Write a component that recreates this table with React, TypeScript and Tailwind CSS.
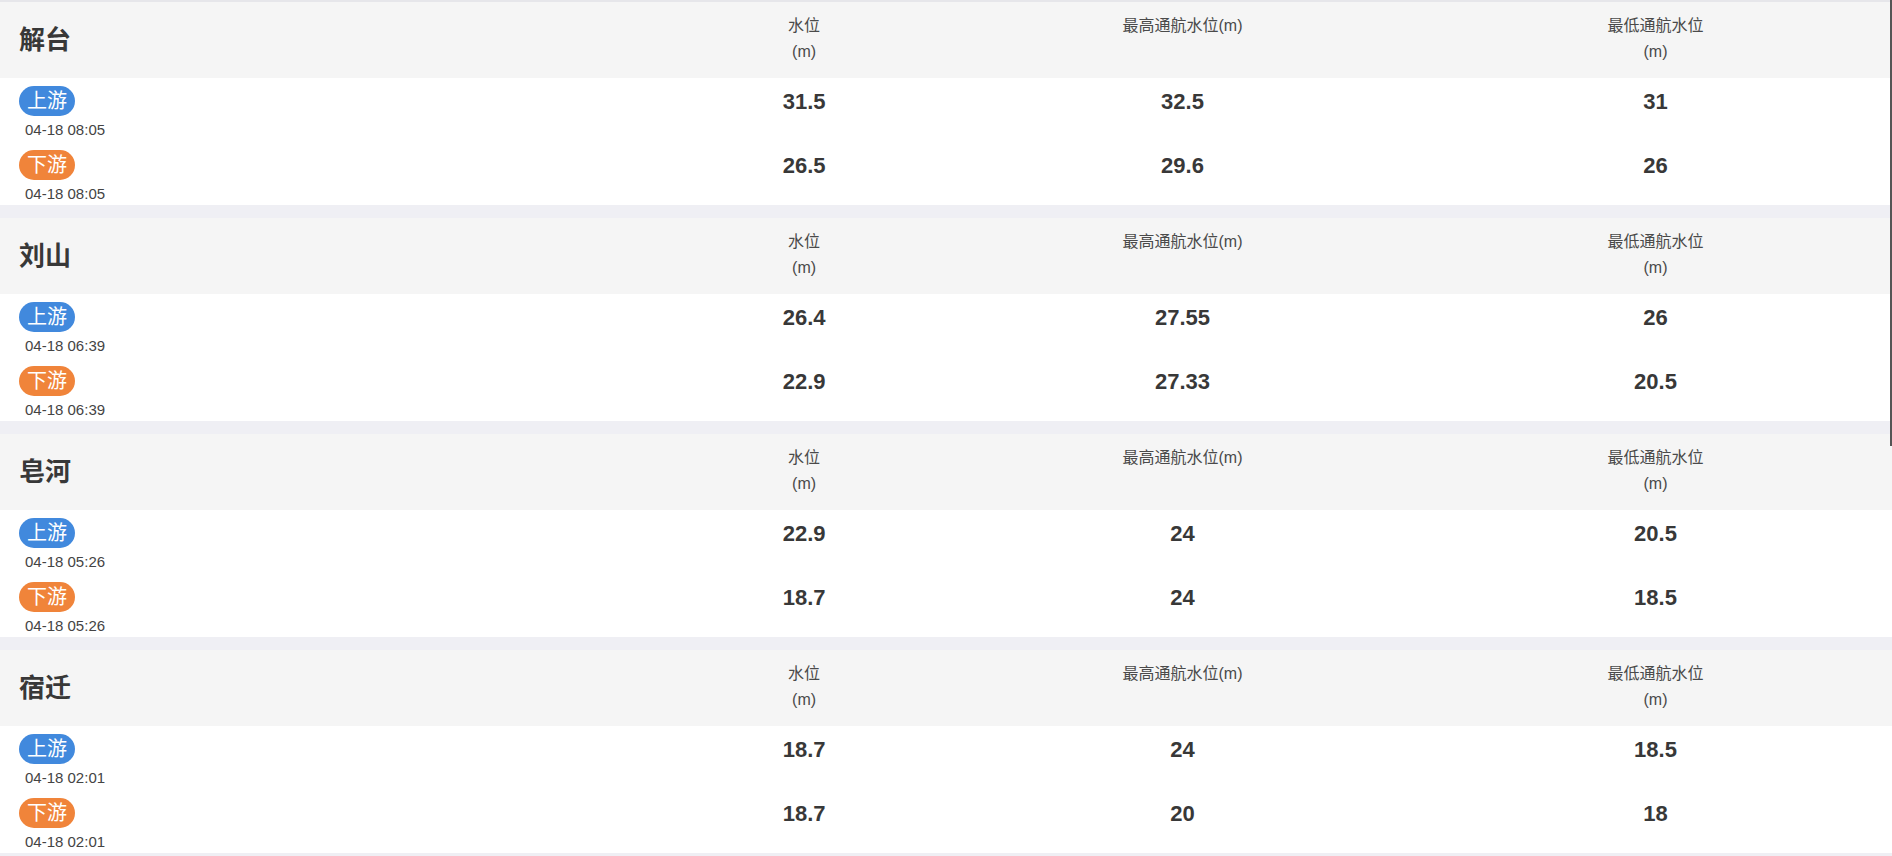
import React from "react";

type Reading = { wl: string; max: string; min: string; time: string };
type Station = { name: string; up: Reading; down: Reading };

const STATIONS: Station[] = [
  {
    name: "解台",
    up: { wl: "31.5", max: "32.5", min: "31", time: "04-18 08:05" },
    down: { wl: "26.5", max: "29.6", min: "26", time: "04-18 08:05" },
  },
  {
    name: "刘山",
    up: { wl: "26.4", max: "27.55", min: "26", time: "04-18 06:39" },
    down: { wl: "22.9", max: "27.33", min: "20.5", time: "04-18 06:39" },
  },
  {
    name: "皂河",
    up: { wl: "22.9", max: "24", min: "20.5", time: "04-18 05:26" },
    down: { wl: "18.7", max: "24", min: "18.5", time: "04-18 05:26" },
  },
  {
    name: "宿迁",
    up: { wl: "18.7", max: "24", min: "18.5", time: "04-18 02:01" },
    down: { wl: "18.7", max: "20", min: "18", time: "04-18 02:01" },
  },
];

const GRID = "grid grid-cols-[35%_15%_25%_25%]";

function ReadingRow({ label, r, down }: { label: string; r: Reading; down?: boolean }) {
  return (
    <div className={GRID}>
      <div className="pl-[19px]">
        <span
          className={`inline-flex h-[30px] w-[56px] items-center justify-center rounded-full text-[20px] leading-none text-white ${
            down ? "bg-[#f0843a]" : "bg-[#4189dd]"
          }`}
        >
          {label}
        </span>
        <div className="mt-[4px] pl-[6px] text-[15px] leading-[20px] text-[#444]">{r.time}</div>
      </div>
      {[r.wl, r.max, r.min].map((v, i) => (
        <div key={i} className="flex h-[30px] items-center justify-center text-[22px] font-bold text-[#383838]">
          {v}
        </div>
      ))}
    </div>
  );
}

function StationCard({ s }: { s: Station }) {
  return (
    <div>
      {/* Header */}
      <div className={`${GRID} h-[76px] bg-[#f5f5f5]`}>
        <div className="flex items-center pl-[19px] text-[26px] font-bold text-[#383838]">{s.name}</div>
        <div className="pt-[11px] text-center text-[16px] leading-[26px] text-[#4a4a4a]">
          水位
          <br />
          (m)
        </div>
        <div className="pt-[11px] text-center text-[16px] leading-[26px] text-[#4a4a4a]">最高通航水位(m)</div>
        <div className="pt-[11px] text-center text-[16px] leading-[26px] text-[#4a4a4a]">
          最低通航水位
          <br />
          (m)
        </div>
      </div>

      {/* Body */}
      <div className="flex h-[127px] flex-col gap-[10px] bg-white pt-[8px]">
        <ReadingRow label="上游" r={s.up} />
        <ReadingRow label="下游" r={s.down} down />
      </div>
    </div>
  );
}

export default function App() {
  return (
    <div className="relative h-[856px] overflow-hidden bg-[#efeff4] font-['Liberation_Sans','Noto_Sans_CJK_SC',sans-serif]">
      <div className="h-[2px] bg-[#e6e6ea]" />
      <div className="flex flex-col gap-[13px]">
        {STATIONS.map((s) => (
          <StationCard key={s.name} s={s} />
        ))}
      </div>
      {/* scroll thumb */}
      <div className="absolute right-0 top-0 h-[446px] w-[2px] bg-[#555]" />
    </div>
  );
}
